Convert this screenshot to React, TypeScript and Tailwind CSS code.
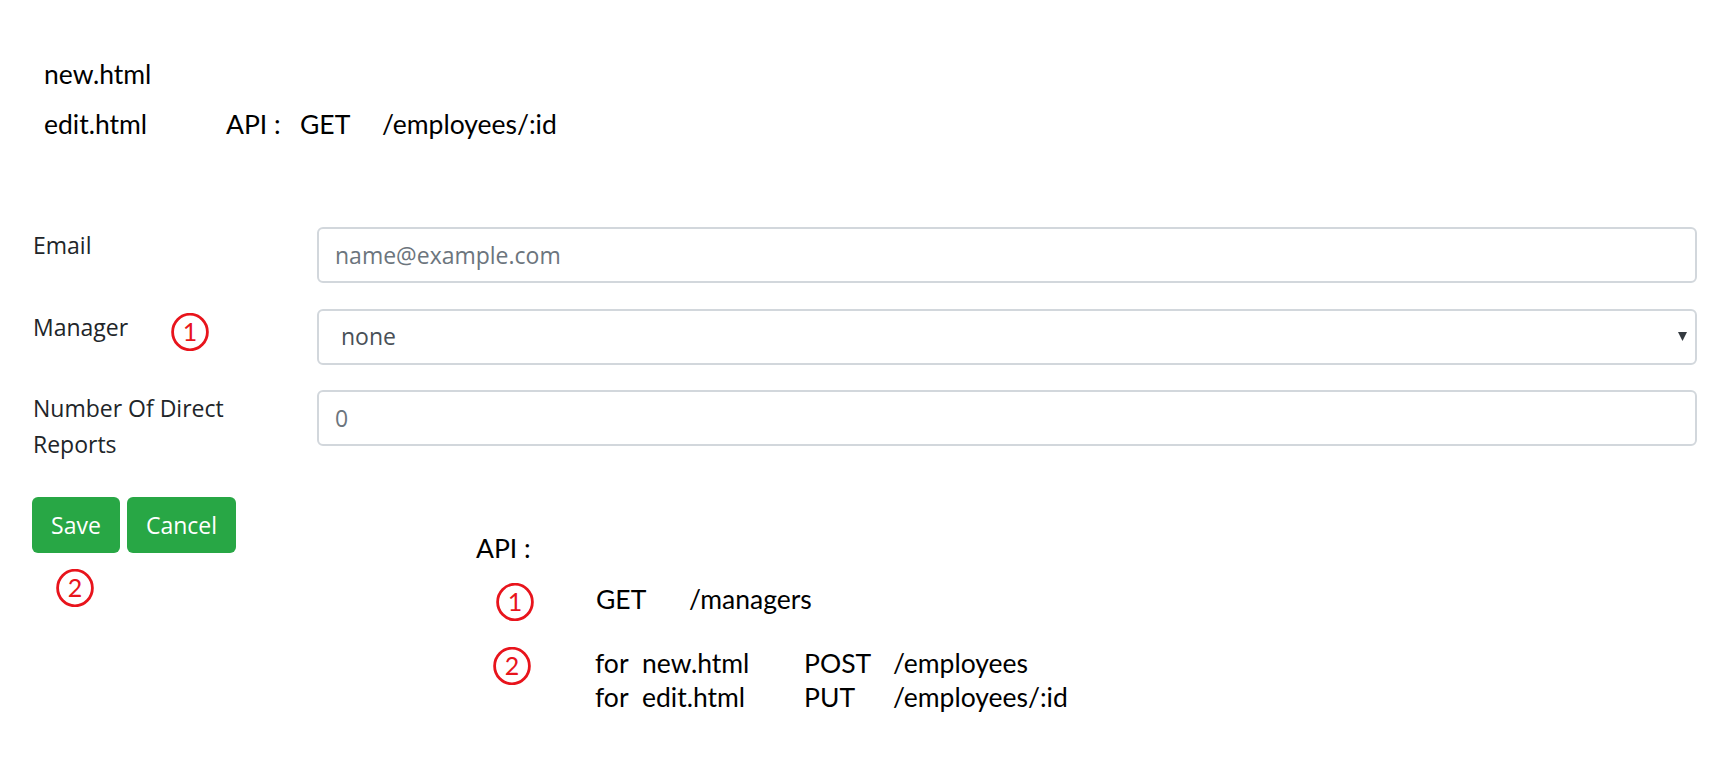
import React from 'react';

const RED = '#e8141c';

function Mark({ n, className = '' }: { n: string; className?: string }) {
  return (
    <svg width="38" height="38" viewBox="0 0 38 38" className={'block shrink-0 ' + className}>
      <ellipse cx="19" cy="19" rx="17.4" ry="17.8" fill="none" stroke={RED} strokeWidth="2.8" />
      <text x="19" y="28" textAnchor="middle" fontFamily="Lato, sans-serif" fontSize="25" fill={RED}>
        {n}
      </text>
    </svg>
  );
}

export default function App() {
  return (
    <div className="w-[1735px] h-[758px] bg-white overflow-hidden text-black">
      {/* page notes */}
      <div className="pt-[57px] pl-[44px] font-['Lato',sans-serif] text-[26.5px] leading-[34px]">
        <div className="h-[34px]">new.html</div>
        <div className="mt-[16px] h-[34px] flex">
          <span className="w-[182px]">edit.html</span>
          <span className="w-[74px]">API :</span>
          <span className="w-[82px]">GET</span>
          <span>/employees/:id</span>
        </div>
      </div>

      {/* form */}
      <form className="mt-[86px] pl-[33px] pr-[38px] font-['Open_Sans',sans-serif] text-[23px] text-[#212529]">
        <div className="flex items-start">
          <label className="w-[284px] shrink-0 leading-[36px]">Email</label>
          <input
            placeholder="name@example.com"
            className="flex-1 h-[56px] rounded-[6px] border-2 border-[#d2d7dc] bg-white px-[16px] text-[#495057] placeholder:text-[#6c757d] outline-none"
          />
        </div>

        <div className="mt-[25.5px] flex items-start">
          <label className="w-[284px] shrink-0 flex items-start leading-[36px]">
            <span className="w-[138px]">Manager</span>
            <Mark n="1" className="mt-[4px]" />
          </label>
          <div className="flex-1 h-[56px] rounded-[6px] border-2 border-[#d2d7dc] bg-white pl-[22px] pr-[8px] flex items-center justify-between text-[#495057]">
            <span>none</span>
            <svg width="9" height="9" viewBox="0 0 9 9" className="block">
              <polygon points="0,0 9,0 4.5,9" fill="#343a40" />
            </svg>
          </div>
        </div>

        <div className="mt-[25.5px] flex items-start">
          <label className="w-[284px] shrink-0 leading-[36px]">
            <span className="block max-w-[239px]">Number Of Direct Reports</span>
          </label>
          <input
            placeholder="0"
            className="flex-1 h-[56px] rounded-[6px] border-2 border-[#d2d7dc] bg-white px-[16px] text-[#495057] placeholder:text-[#6c757d] outline-none"
          />
        </div>
      </form>

      {/* actions + api notes */}
      <div className="mt-[35px] flex pl-[32px]">
        <div className="w-[444px] shrink-0">
          <div className="flex gap-[7px] font-['Open_Sans',sans-serif] text-[23px] text-white">
            <button className="w-[88px] h-[56px] rounded-[6px] bg-[#28a745]">Save</button>
            <button className="w-[109px] h-[56px] rounded-[6px] bg-[#28a745]">Cancel</button>
          </div>
          <Mark n="2" className="mt-[16px] ml-[24px]" />
        </div>

        <div className="pt-[34px] font-['Lato',sans-serif] text-[26.5px] leading-[34px]">
          <div className="h-[34px]">API :</div>

          <div className="mt-[17px] h-[34px] flex items-start">
            <div className="w-[120px] shrink-0">
              <Mark n="1" className="ml-[20px] mt-[1px]" />
            </div>
            <span className="w-[93px]">GET</span>
            <span>/managers</span>
          </div>

          <div className="mt-[30px] h-[34px] flex items-start">
            <div className="w-[119px] shrink-0">
              <Mark n="2" className="ml-[17px] mt-[1px]" />
            </div>
            <span className="w-[47px]">for</span>
            <span className="w-[162px]">new.html</span>
            <span className="w-[89px]">POST</span>
            <span>/employees</span>
          </div>
          <div className="h-[34px] flex items-start">
            <div className="w-[119px] shrink-0" />
            <span className="w-[47px]">for</span>
            <span className="w-[162px]">edit.html</span>
            <span className="w-[89px]">PUT</span>
            <span>/employees/:id</span>
          </div>
        </div>
      </div>
    </div>
  );
}
